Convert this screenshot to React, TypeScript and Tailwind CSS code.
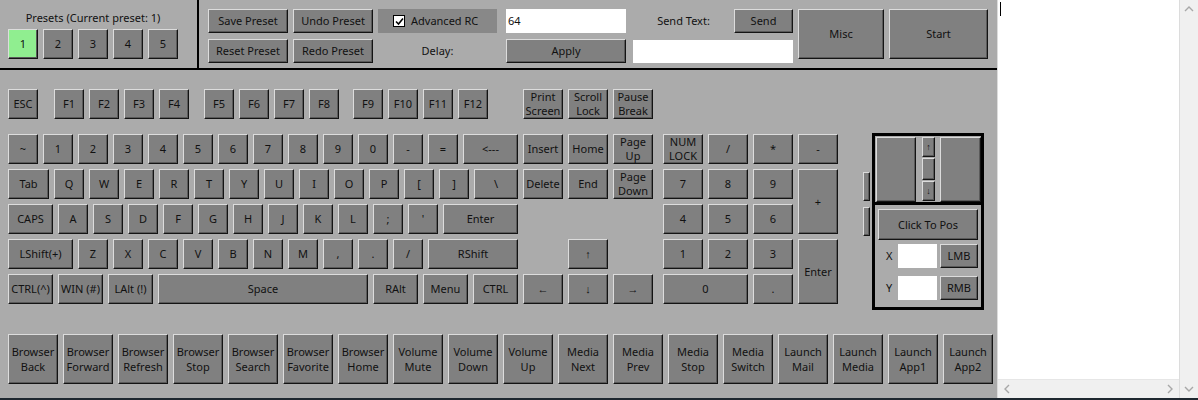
import type { ReactNode } from 'react';

const bevel =
  'border border-t-[#dcdcdc] border-l-[#dcdcdc] border-r-[#141414] border-b-[#141414] shadow-[inset_-1px_-1px_0_#5a5a5a]';

function Btn({
  children,
  className = 'w-[30px] h-[30px]',
  green,
}: {
  children?: ReactNode;
  className?: string;
  green?: boolean;
}) {
  return (
    <div
      className={`${bevel} ${green ? 'bg-[#90ee90]' : 'bg-[#808080]'} ${className} flex shrink-0 flex-col items-center justify-center text-center leading-[14px] text-[#111]`}
    >
      {children}
    </div>
  );
}

function Two({ a, b }: { a: string; b: string }) {
  return (
    <>
      <span>{a}</span>
      <span>{b}</span>
    </>
  );
}

function Chevron({ dir }: { dir: 'up' | 'down' | 'left' | 'right' }) {
  const d = {
    up: 'M1 6 L5 2 L9 6',
    down: 'M1 2 L5 6 L9 2',
    left: 'M6 1 L2 5 L6 9',
    right: 'M2 1 L6 5 L2 9',
  }[dir];
  const vert = dir === 'up' || dir === 'down';
  return (
    <svg width={vert ? 10 : 8} height={vert ? 8 : 10} viewBox={vert ? '0 0 10 8' : '0 0 8 10'}>
      <path d={d} fill="none" stroke="#a8a8a8" strokeWidth="1.4" />
    </svg>
  );
}

const numRow = ['1', '2', '3', '4', '5', '6', '7', '8', '9', '0', '-', '='];
const qRow = ['Q', 'W', 'E', 'R', 'T', 'Y', 'U', 'I', 'O', 'P', '[', ']'];
const aRow = ['A', 'S', 'D', 'F', 'G', 'H', 'J', 'K', 'L', ';', "'"];
const zRow = ['Z', 'X', 'C', 'V', 'B', 'N', 'M', ',', '.', '/'];

const bottomKeys: [string, string][] = [
  ['Browser', 'Back'],
  ['Browser', 'Forward'],
  ['Browser', 'Refresh'],
  ['Browser', 'Stop'],
  ['Browser', 'Search'],
  ['Browser', 'Favorite'],
  ['Browser', 'Home'],
  ['Volume', 'Mute'],
  ['Volume', 'Down'],
  ['Volume', 'Up'],
  ['Media', 'Next'],
  ['Media', 'Prev'],
  ['Media', 'Stop'],
  ['Media', 'Switch'],
  ['Launch', 'Mail'],
  ['Launch', 'Media'],
  ['Launch', 'App1'],
  ['Launch', 'App2'],
];

function TopBar() {
  return (
    <div className="flex h-[70px] border-b-2 border-black">
      <div className="flex w-[199px] flex-col border-r-2 border-black pl-[8px] pt-[10px]">
        <div className="w-[170px] text-center leading-[16px]">Presets (Current preset: 1)</div>
        <div className="mt-[3px] flex gap-[5px]">
          <Btn green>1</Btn>
          <Btn>2</Btn>
          <Btn>3</Btn>
          <Btn>4</Btn>
          <Btn>5</Btn>
        </div>
      </div>
      <div className="flex pl-[9px] pt-[9px]">
        <div className="flex flex-col gap-[6px]">
          <Btn className="w-[80px] h-[24px]">Save Preset</Btn>
          <Btn className="w-[80px] h-[24px]">Reset Preset</Btn>
        </div>
        <div className="ml-[5px] flex flex-col gap-[6px]">
          <Btn className="w-[80px] h-[24px]">Undo Preset</Btn>
          <Btn className="w-[80px] h-[24px]">Redo Preset</Btn>
        </div>
        <div className="ml-[5px] flex flex-col gap-[6px]">
          <div className="flex h-[24px] w-[119px] items-center bg-[#888888] pl-[15px]">
            <div className="flex h-[12px] w-[12px] items-center justify-center border border-black bg-white">
              <svg width="9" height="9" viewBox="0 0 9 9">
                <path d="M1 4.5 L3.5 7 L8 1.5" fill="none" stroke="#000" strokeWidth="1.6" />
              </svg>
            </div>
            <span className="ml-[6px]">Advanced RC</span>
          </div>
          <div className="flex h-[24px] items-center justify-center">Delay:</div>
        </div>
        <div className="ml-[9px] flex flex-col gap-[6px]">
          <div className="flex h-[24px] w-[120px] items-center bg-white pl-[2px]">64</div>
          <Btn className="w-[120px] h-[24px]">Apply</Btn>
        </div>
        <div className="ml-[7px] flex flex-col gap-[7px]">
          <div className="flex h-[24px] items-center">
            <div className="w-[101px] text-center">Send Text:</div>
            <Btn className="w-[59px] h-[24px]">Send</Btn>
          </div>
          <div className="h-[23px] w-[160px] bg-white" />
        </div>
        <Btn className="ml-[5px] w-[86px] h-[50px]">Misc</Btn>
        <Btn className="ml-[5px] w-[99px] h-[50px]">Start</Btn>
      </div>
    </div>
  );
}

function MainKeys() {
  return (
    <div className="flex w-[510px] flex-col">
      <div className="flex">
        <Btn>ESC</Btn>
        <div className="ml-[16px] flex gap-[5px]">
          <Btn>F1</Btn>
          <Btn>F2</Btn>
          <Btn>F3</Btn>
          <Btn>F4</Btn>
        </div>
        <div className="ml-[15px] flex gap-[5px]">
          <Btn>F5</Btn>
          <Btn>F6</Btn>
          <Btn>F7</Btn>
          <Btn>F8</Btn>
        </div>
        <div className="ml-[14px] flex gap-[5px]">
          <Btn>F9</Btn>
          <Btn>F10</Btn>
          <Btn>F11</Btn>
          <Btn>F12</Btn>
        </div>
      </div>
      <div className="mt-[15px] flex flex-col gap-[5px]">
        <div className="flex gap-[5px]">
          <Btn>~</Btn>
          {numRow.map((k) => (
            <Btn key={k}>{k}</Btn>
          ))}
          <Btn className="w-[55px] h-[30px]">&lt;---</Btn>
        </div>
        <div className="flex gap-[5px]">
          <Btn className="w-[41px] h-[30px]">Tab</Btn>
          {qRow.map((k) => (
            <Btn key={k}>{k}</Btn>
          ))}
          <Btn className="w-[44px] h-[30px]">\</Btn>
        </div>
        <div className="flex gap-[5px]">
          <Btn className="w-[45px] h-[30px]">CAPS</Btn>
          {aRow.map((k) => (
            <Btn key={k}>{k}</Btn>
          ))}
          <Btn className="w-[75px] h-[30px]">Enter</Btn>
        </div>
        <div className="flex gap-[5px]">
          <Btn className="w-[65px] h-[30px]">LShift(+)</Btn>
          {zRow.map((k) => (
            <Btn key={k}>{k}</Btn>
          ))}
          <Btn className="w-[90px] h-[30px]">RShift</Btn>
        </div>
        <div className="flex gap-[5px]">
          <Btn className="w-[45px] h-[30px]">CTRL(^)</Btn>
          <Btn className="w-[45px] h-[30px]">WIN (#)</Btn>
          <Btn className="w-[45px] h-[30px]">LAlt (!)</Btn>
          <Btn className="w-[210px] h-[30px]">Space</Btn>
          <Btn className="w-[45px] h-[30px]">RAlt</Btn>
          <Btn className="w-[45px] h-[30px]">Menu</Btn>
          <Btn className="w-[45px] h-[30px]">CTRL</Btn>
        </div>
      </div>
    </div>
  );
}

function NavKeys() {
  const k = 'w-[40px] h-[30px]';
  return (
    <div className="ml-[5px] flex flex-col">
      <div className="flex gap-[5px]">
        <Btn className={k}>
          <Two a="Print" b="Screen" />
        </Btn>
        <Btn className={k}>
          <Two a="Scroll" b="Lock" />
        </Btn>
        <Btn className={k}>
          <Two a="Pause" b="Break" />
        </Btn>
      </div>
      <div className="mt-[15px] grid grid-cols-[repeat(3,40px)] grid-rows-[repeat(5,30px)] gap-[5px]">
        <Btn className={k}>Insert</Btn>
        <Btn className={k}>Home</Btn>
        <Btn className={k}>
          <Two a="Page" b="Up" />
        </Btn>
        <Btn className={k}>Delete</Btn>
        <Btn className={k}>End</Btn>
        <Btn className={k}>
          <Two a="Page" b="Down" />
        </Btn>
        <div />
        <div />
        <div />
        <div />
        <Btn className={k}>↑</Btn>
        <div />
        <Btn className={k}>←</Btn>
        <Btn className={k}>↓</Btn>
        <Btn className={k}>→</Btn>
      </div>
    </div>
  );
}

function NumPad() {
  const k = 'w-[40px] h-[30px]';
  return (
    <div className="ml-[10px] mt-[45px] grid grid-cols-[repeat(4,40px)] grid-rows-[repeat(5,30px)] gap-[5px]">
      <Btn className={k}>
        <Two a="NUM" b="LOCK" />
      </Btn>
      <Btn className={k}>/</Btn>
      <Btn className={k}>*</Btn>
      <Btn className={k}>-</Btn>
      <Btn className={k}>7</Btn>
      <Btn className={k}>8</Btn>
      <Btn className={k}>9</Btn>
      <Btn className="row-span-2 w-[40px] h-[65px]">+</Btn>
      <Btn className={k}>4</Btn>
      <Btn className={k}>5</Btn>
      <Btn className={k}>6</Btn>
      <Btn className={k}>1</Btn>
      <Btn className={k}>2</Btn>
      <Btn className={k}>3</Btn>
      <Btn className="row-span-2 w-[40px] h-[65px]">Enter</Btn>
      <Btn className="col-span-2 w-[85px] h-[30px]">0</Btn>
      <Btn className={k}>.</Btn>
    </div>
  );
}

function MousePanel() {
  return (
    <div className="ml-[2px] mt-[44px] flex h-[177px] w-[112px] flex-col border-[3px] border-black">
      <div className="flex h-[69px] shrink-0 border-b-[3px] border-black pl-[1px] pt-[1px]">
        <Btn className="w-[40px] h-[65px]" />
        <div className="ml-[6px] flex flex-col gap-[1px]">
          <Btn className="w-[13px] h-[20px] text-[9px]">↑</Btn>
          <Btn className="w-[13px] h-[22px]" />
          <Btn className="w-[13px] h-[20px] text-[9px]">↓</Btn>
        </div>
        <Btn className="ml-[5px] w-[41px] h-[65px]" />
      </div>
      <div className="flex flex-col pl-[3px] pt-[4px]">
        <Btn className="w-[100px] h-[31px]">Click To Pos</Btn>
        <div className="mt-[4px] flex items-center">
          <div className="w-[20px] pl-[8px]">X</div>
          <div className="h-[24px] w-[39px] bg-white" />
          <Btn className="ml-[3px] w-[38px] h-[24px]">LMB</Btn>
        </div>
        <div className="mt-[8px] flex items-center">
          <div className="w-[20px] pl-[8px]">Y</div>
          <div className="h-[24px] w-[39px] bg-white" />
          <Btn className="ml-[3px] w-[38px] h-[24px]">RMB</Btn>
        </div>
      </div>
    </div>
  );
}

export default function App() {
  return (
    <div className="flex h-[400px] w-[1198px] flex-col overflow-hidden bg-[#ababab] font-['Noto_Sans','Liberation_Sans',sans-serif] text-[11px] text-[#111]">
      <div className="flex h-[398px]">
        <div className="flex w-[997px] flex-col">
          <TopBar />
          <div className="flex h-[264px] pl-[8px] pt-[19px]">
            <MainKeys />
            <NavKeys />
            <NumPad />
            <div className="ml-[25px] mt-[83px] flex flex-col gap-[6px]">
              <Btn className="w-[7px] h-[29px]" />
              <Btn className="w-[7px] h-[29px]" />
            </div>
            <MousePanel />
          </div>
          <div className="flex gap-[5px] pl-[8px]">
            {bottomKeys.map(([a, b]) => (
              <Btn key={a + b} className="w-[50px] h-[50px] leading-[15px]">
                <Two a={a} b={b} />
              </Btn>
            ))}
          </div>
        </div>
        <div className="flex w-[183px] flex-col border-l border-r border-[#dcdcdc] bg-white">
          <div className="relative flex-1">
            <div className="absolute left-[2px] top-[2px] h-[14px] w-px bg-black" />
          </div>
          <div className="flex h-[19px] items-center justify-between border-t border-[#e6e6e6] bg-[#f0f0f0] px-[5px]">
            <Chevron dir="left" />
            <Chevron dir="right" />
          </div>
        </div>
        <div className="flex w-[18px] flex-col items-center justify-between bg-[#f0f0f0] py-[5px]">
          <Chevron dir="up" />
          <Chevron dir="down" />
        </div>
      </div>
      <div className="h-[2px] bg-[#1f2830]" />
    </div>
  );
}
